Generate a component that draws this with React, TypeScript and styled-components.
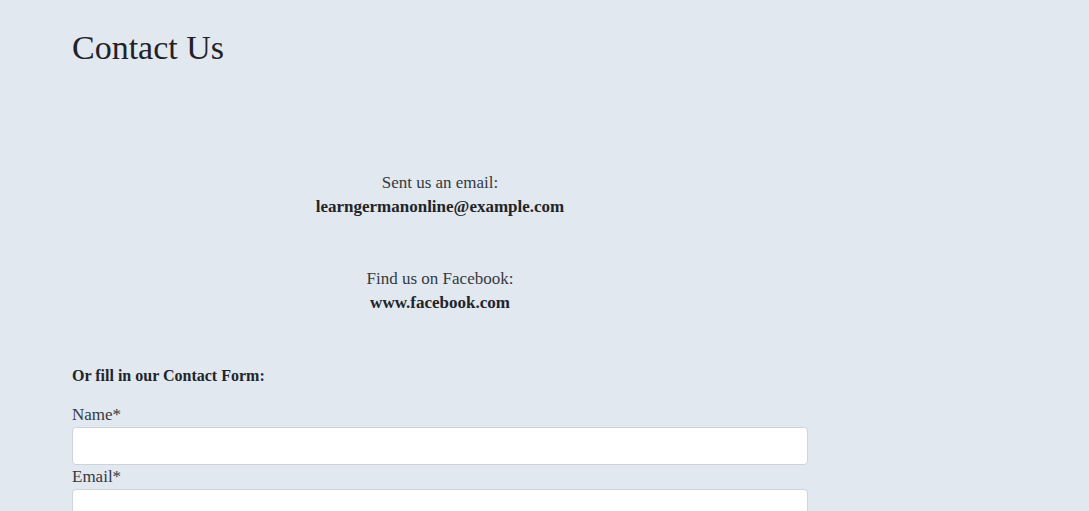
import styled, { createGlobalStyle } from "styled-components";

const GlobalStyle = createGlobalStyle`
    html, body {
        margin: 0;
        padding: 0;
        background: #e2e8f0;
    }
    body {
        font-family: "Liberation Serif", "Times New Roman", serif;
        color: #212529;
    }
`;

const Page = styled.main`
    padding: 28px 72px 0 72px;
    width: 736px;
`;

const Title = styled.h1`
    margin: 0;
    font-size: 34px;
    line-height: 40px;
    font-weight: 400;
    color: #1f2328;
`;

const InfoList = styled.section`
    display: flex;
    flex-direction: column;
    align-items: center;
    gap: 48px;
    margin-top: 103px;
`;

const Info = styled.div`
    display: flex;
    flex-direction: column;
    align-items: center;
    font-size: 17px;
    line-height: 24px;
`;

const InfoLabel = styled.span`
    color: #343a40;
`;

const InfoValue = styled.strong`
    font-weight: 700;
    color: #212529;
`;

const FormTitle = styled.h2`
    margin: 49px 0 15px 0;
    font-size: 16px;
    line-height: 24px;
    font-weight: 700;
`;

const Form = styled.form`
    display: flex;
    flex-direction: column;
`;

const Label = styled.label`
    font-size: 17px;
    line-height: 24px;
    color: #343a40;
`;

const Input = styled.input`
    box-sizing: border-box;
    width: 736px;
    height: 38px;
    margin: 0;
    border: 1px solid #ced4da;
    border-radius: 4px;
    background: #fff;
    font-size: 16px;
    padding: 6px 12px;
`;

function App() {
    return (
        <>
            <GlobalStyle />
            <Page>
                <Title>Contact Us</Title>
                <InfoList>
                    <Info>
                        <InfoLabel>Sent us an email:</InfoLabel>
                        <InfoValue>learngermanonline@example.com</InfoValue>
                    </Info>
                    <Info>
                        <InfoLabel>Find us on Facebook:</InfoLabel>
                        <InfoValue>www.facebook.com</InfoValue>
                    </Info>
                </InfoList>
                <FormTitle>Or fill in our Contact Form:</FormTitle>
                <Form>
                    <Label htmlFor="name">Name*</Label>
                    <Input id="name" type="text" />
                    <Label htmlFor="email">Email*</Label>
                    <Input id="email" type="email" />
                </Form>
            </Page>
        </>
    );
}

export default App;
